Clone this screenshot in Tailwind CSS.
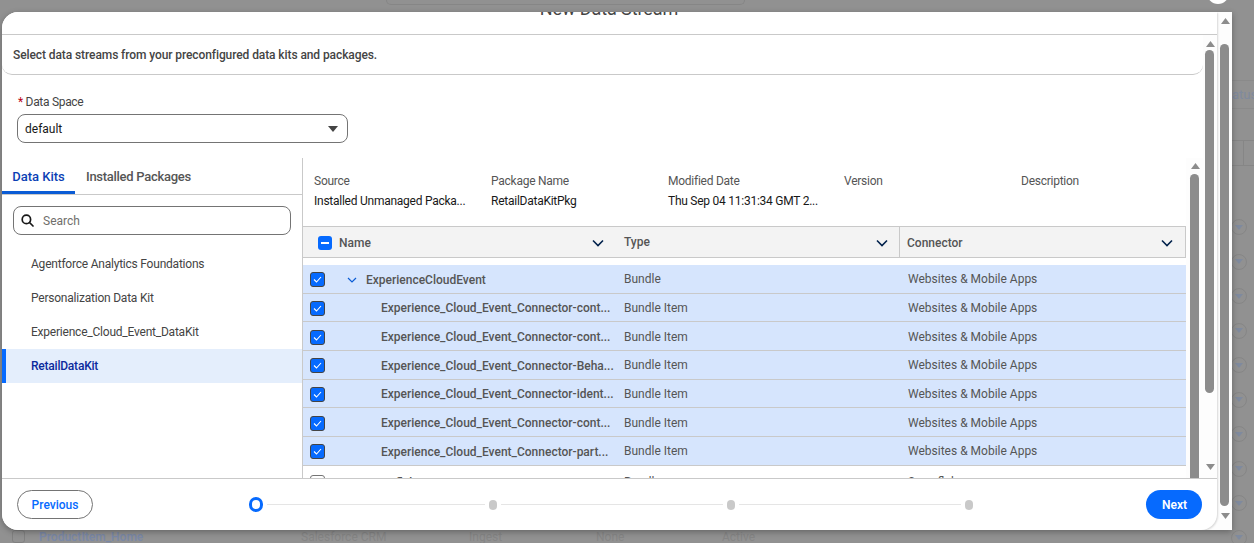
<!DOCTYPE html>
<html lang="en">
<head>
  <meta charset="UTF-8">
  <title>New Data Stream</title>
  <script src="https://cdn.jsdelivr.net/npm/@tailwindcss/browser@4"></script>
</head>
<body class="relative h-[543px] w-[1254px] overflow-hidden bg-[#919191] font-['Roboto',sans-serif] text-xs text-[#444]">

  <!-- page behind the scrim -->
  <div class="absolute left-[386px] top-0 h-[5px] w-[359px] rounded-b-lg border border-t-0 border-[#868686]"></div>
  <div class="absolute left-[1207px] top-[-18px] size-[22px] rounded-full bg-white"></div>
  <div class="absolute left-[1232px] top-[80px] flex h-[29px] w-[22px] items-center overflow-hidden border-y border-[#8a8a8a] text-[13px] text-[#7f8a9e]">atus</div>
  <div class="absolute left-[1232px] top-[140px] flex h-[26px] w-[22px] justify-end border-y border-[#868686]"><div class="w-[11px] border-l border-[#868686]"></div></div>
  <div id="bg-circles" class="absolute left-[1231px] top-[219px] flex flex-col gap-[18.5px]"></div>
  <div class="absolute bottom-0 left-0 flex h-[13px] w-full items-center text-xs text-[#858585]">
    <div class="ml-[12px] size-[13px] rounded-[3px] border border-[#808080]"></div>
    <div class="ml-[14px] w-[262px] font-semibold text-[#7a88a6]">ProductItem_Home</div>
    <div class="w-[168px]">Salesforce CRM</div>
    <div class="w-[127px]">Ingest</div>
    <div class="w-[126px]">None</div>
    <div>Active</div>
  </div>

  <!-- modal -->
  <div class="absolute left-[2px] top-[12px] flex h-[518px] w-[1230px] overflow-hidden rounded-l-[16px] bg-[#fdfdfd] shadow-[0_2px_6px_rgba(0,0,0,0.3)]">
    <div class="flex w-[1215px] flex-col rounded-br-[16px] bg-white shadow-[1px_1px_2px_rgba(0,0,0,0.15)]">
      <div class="flex h-[23px] shrink-0 items-end justify-center overflow-hidden border-b border-[#c9c9c9] pb-[12px] pr-[1px]">
        <h1 class="shrink-0 text-[18px] leading-[26px] tracking-[-0.1px] text-[#444]">New Data Stream</h1>
      </div>

      <div class="flex min-h-0 flex-1">
        <div class="flex min-w-0 flex-1 flex-col overflow-hidden">
          <p class="flex h-[40px] shrink-0 items-center rounded-b-[10px] border-b border-[#c9c9c9] pl-[11px] font-medium tracking-[-0.09px] text-[#444]">Select data streams from your preconfigured data kits and packages.</p>

          <div class="h-[83px] shrink-0 pl-[15px] pt-[19px]">
            <label class="block h-[20px] pl-[1px] leading-[16px] tracking-[-0.3px] text-[#444]"><span class="text-[#ba0517]">*</span> Data Space</label>
            <div class="flex h-[29px] w-[331px] items-center justify-between rounded-lg border border-[#747474] pl-[7px] pr-[9px] text-[#181818]">
              default
              <svg class="h-[6px] w-[10px]" viewBox="0 0 10 6"><path d="M0 0h10L5 6z" fill="#444"/></svg>
            </div>
          </div>

          <div class="flex min-h-0 flex-1">
            <!-- left panel -->
            <div class="w-[301px] shrink-0 border-r border-[#c9c9c9]">
              <div class="flex h-[37px] border-b border-[#c9c9c9] text-[13px] font-medium">
                <div class="flex w-[73px] items-center justify-center border-b-[3px] border-[#0b5cd5] pt-[4px] text-[#0b3fb5]">Data Kits</div>
                <div class="flex items-center pl-[11px] pt-[2px] tracking-[-0.28px] text-[#555]">Installed Packages</div>
              </div>
              <div class="mx-[11px] mt-[11px] flex h-[29px] items-center rounded-lg border border-[#747474] pl-[7px] text-[#706e6b]">
                <svg class="mr-[9px] size-[13px]" viewBox="0 0 13 13" fill="none" stroke="#181818" stroke-width="1.7"><circle cx="5.4" cy="5.4" r="4.2"/><path d="M8.5 8.5 12 12" stroke-linecap="round"/></svg>
                Search
              </div>
              <ul class="mt-[12px] tracking-[-0.22px]">
                <li class="flex h-[34px] items-center pl-[29px]">Agentforce Analytics Foundations</li>
                <li class="flex h-[34px] items-center pl-[29px]">Personalization Data Kit</li>
                <li class="flex h-[34px] items-center pl-[29px]">Experience_Cloud_Event_DataKit</li>
                <li class="flex h-[34px] items-center border-l-4 border-[#066afe] bg-[#e4eefc] pl-[25px] font-medium text-[#0b2a9c]">RetailDataKit</li>
              </ul>
            </div>

            <!-- right panel -->
            <div class="flex min-w-0 flex-1 overflow-hidden">
              <div class="w-[883px] shrink-0">
                <div class="grid h-[68px] grid-cols-[177px_177px_176px_177px_1fr] pl-[11px] pt-[15px] tracking-[-0.25px]">
                  <div><p class="mb-[4px] leading-[16px] text-[#555]">Source</p><p class="leading-[16px] text-[#181818]">Installed Unmanaged Packa...</p></div>
                  <div><p class="mb-[4px] leading-[16px] text-[#555]">Package Name</p><p class="leading-[16px] text-[#181818]">RetailDataKitPkg</p></div>
                  <div><p class="mb-[4px] leading-[16px] text-[#555]">Modified Date</p><p class="leading-[16px] text-[#181818]">Thu Sep 04 11:31:34 GMT 2...</p></div>
                  <div><p class="leading-[16px] text-[#555]">Version</p></div>
                  <div><p class="leading-[16px] text-[#555]">Description</p></div>
                </div>
                <div class="grid h-[32px] grid-cols-[313px_284px_1fr] items-center border-y border-[#c9c9c9] border-r bg-[#f3f3f3] font-medium text-[#555]">
                  <div class="flex items-center pl-[15px] pr-[10px]">
                    <span class="flex size-[14px] items-center justify-center rounded-[3px] bg-[#066afe]"><span class="h-[2px] w-[8px] bg-white"></span></span>
                    <span class="ml-[7px] flex-1">Name</span>
                    <svg class="mr-[2px] h-[8px] w-[12px]" viewBox="0 0 12 8" fill="none" stroke="#03234d" stroke-width="1.6"><path d="M1 1.5 6 6.5l5-5"/></svg>
                  </div>
                  <div class="flex items-center border-r border-[#c9c9c9] pl-[8px] pr-[11px] leading-[31px]">
                    <span class="flex-1">Type</span>
                    <svg class="h-[8px] w-[12px]" viewBox="0 0 12 8" fill="none" stroke="#03234d" stroke-width="1.6"><path d="M1 1.5 6 6.5l5-5"/></svg>
                  </div>
                  <div class="flex items-center pl-[7px] pr-[12px]">
                    <span class="flex-1">Connector</span>
                    <svg class="h-[8px] w-[12px]" viewBox="0 0 12 8" fill="none" stroke="#03234d" stroke-width="1.6"><path d="M1 1.5 6 6.5l5-5"/></svg>
                  </div>
                </div>
                <div id="rows" class="mt-[7px]"></div>
              </div>
              <!-- table scrollbar -->
              <div class="flex w-[17px] shrink-0 flex-col items-start bg-[#fdfdfd] pl-[4px] pt-[5px]">
                <svg class="ml-[0.5px] h-[6px] w-[9px]" viewBox="0 0 9 6"><path d="M4.5 0 9 6H0z" fill="#8c8c8c"/></svg>
                <div class="mt-[5px] w-[9px] flex-1 rounded-t-full bg-[#8c8c8c]"></div>
              </div>
            </div>
          </div>
        </div>

        <!-- modal body scrollbar -->
        <div class="flex w-[14px] shrink-0 flex-col bg-[#fdfdfd] pl-[2px] pt-[6px]">
          <svg class="ml-[0.5px] h-[6px] w-[9px]" viewBox="0 0 9 6"><path d="M4.5 0 9 6H0z" fill="#8c8c8c"/></svg>
          <div class="mt-[3px] h-[343px] w-[9px] rounded-full bg-[#8c8c8c]"></div>
          <svg class="ml-[0.5px] mt-[71px] h-[6px] w-[9px]" viewBox="0 0 9 6"><path d="M0 0h9L4.500 6z" fill="#8c8c8c"/></svg>
        </div>
      </div>

      <!-- footer -->
      <div class="flex h-[52px] shrink-0 items-center border-t border-[#c9c9c9] pl-[15px] pr-[15px]">
        <button class="h-[29px] w-[76px] rounded-full border border-[#747474] text-xs font-medium text-[#066afe]">Previous</button>
        <div class="ml-[156px] flex items-center">
          <span class="h-[15px] w-[14px] shrink-0 rounded-full border-[3px] border-[#066afe]"></span>
          <span class="mx-[4px] h-px w-[218px] bg-[#e5e5e5]"></span>
          <span class="h-[10px] w-[8px] shrink-0 rounded-full bg-[#c9c9c9]"></span>
          <span class="mx-[4px] h-px w-[222px] bg-[#e5e5e5]"></span>
          <span class="h-[10px] w-[8px] shrink-0 rounded-full bg-[#c9c9c9]"></span>
          <span class="mx-[4px] h-px w-[222px] bg-[#e5e5e5]"></span>
          <span class="h-[10px] w-[8px] shrink-0 rounded-full bg-[#c9c9c9]"></span>
        </div>
        <button class="ml-auto h-[29px] w-[56px] rounded-full bg-[#066afe] pl-[1px] text-xs font-semibold text-white">Next</button>
      </div>
    </div>

    <!-- outer scrollbar -->
    <div class="flex w-[15px] shrink-0 flex-col pl-[3px] pt-[6px]">
      <svg class="ml-[0.5px] h-[6px] w-[9px]" viewBox="0 0 9 6"><path d="M4.5 0 9 6H0z" fill="#8c8c8c"/></svg>
      <div class="mt-[20px] h-[462px] w-[9px] rounded-full bg-[#8c8c8c]"></div>
      <svg class="ml-[0.5px] mt-[7px] h-[6px] w-[9px]" viewBox="0 0 9 6"><path d="M0 0h9L4.500 6z" fill="#8c8c8c"/></svg>
    </div>
  </div>

  <script>
    const items = [
      { name: "ExperienceCloudEvent", type: "Bundle", connector: "Websites & Mobile Apps", parent: true, checked: true },
      { name: "Experience_Cloud_Event_Connector-cont...", type: "Bundle Item", connector: "Websites & Mobile Apps", checked: true },
      { name: "Experience_Cloud_Event_Connector-cont...", type: "Bundle Item", connector: "Websites & Mobile Apps", checked: true },
      { name: "Experience_Cloud_Event_Connector-Beha...", type: "Bundle Item", connector: "Websites & Mobile Apps", checked: true },
      { name: "Experience_Cloud_Event_Connector-ident...", type: "Bundle Item", connector: "Websites & Mobile Apps", checked: true },
      { name: "Experience_Cloud_Event_Connector-cont...", type: "Bundle Item", connector: "Websites & Mobile Apps", checked: true },
      { name: "Experience_Cloud_Event_Connector-part...", type: "Bundle Item", connector: "Websites & Mobile Apps", checked: true },
      { name: "Snowflake_01", type: "Bundle", connector: "Snowflake", parent: true, checked: false },
    ];

    function renderRow(item) {
      const rowClass = item.checked ? "bg-[#d6e5fd] border-b border-[#c9c9c9]" : "bg-white pt-[4px]";
      const box = item.checked
        ? `<span class="flex size-[15px] shrink-0 items-center justify-center rounded-[3px] border border-[#444] bg-[#066afe]"><svg class="h-[7px] w-[9px]" viewBox="0 0 9 7" fill="none" stroke="white" stroke-width="1.1"><path d="M1 3.500 3.500 6 8 1"/></svg></span>`
        : `<span class="size-[15px] shrink-0 rounded-[3px] border border-[#747474] bg-white"></span>`;
      const chevron = item.parent && item.checked
        ? `<svg class="ml-[22px] h-[6px] w-[10px] shrink-0" viewBox="0 0 10 6" fill="none" stroke="#0b5cd5" stroke-width="1.2"><path d="M1 1 5 5l4-4"/></svg><span class="ml-[9px] truncate font-medium">`
        : item.parent
          ? `<span class="ml-[41px] truncate font-medium">`
          : `<span class="ml-[56px] truncate font-medium">`;
      return `<div class="grid h-[28.67px] grid-cols-[313px_284px_1fr] items-center ${rowClass} text-[#555]">
        <div class="flex items-center pl-[7px] pt-[2px]">${box}${chevron}${item.name}</span></div>
        <div class="pl-[8px] pt-[1px]">${item.type}</div>
        <div class="pl-[8px] pt-[1px]">${item.connector.replace("&", "&amp;")}</div>
      </div>`;
    }

    document.getElementById("rows").innerHTML = items.map(renderRow).join("");
    document.getElementById("bg-circles").innerHTML = Array(10).fill(
      `<span class="flex size-[16px] items-center justify-center rounded-full border border-[#868686]"><svg class="h-[5px] w-[8px]" viewBox="0 0 8 5"><path d="M0 0h8L4 5z" fill="#7f8a9e"/></svg></span>`
    ).join("");
  </script>
</body>
</html>
